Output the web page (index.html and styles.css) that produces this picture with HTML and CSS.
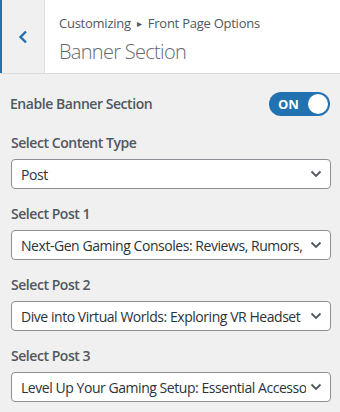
FILE: index.html
```html
<!DOCTYPE html>
<html lang="en">
<head>
    <meta charset="UTF-8">
    <meta name="viewport" content="width=device-width, initial-scale=1.0">
    <title>Banner Section</title>
    <link rel="stylesheet" href="styles.css">
</head>
<body>
    <div class="section-head">
        <button class="back" type="button" aria-label="Back">
            <svg width="12" height="16" viewBox="0 0 12 16"><path d="M9 2.5 L3.5 8 L9 13.5" fill="none" stroke="#2271b1" stroke-width="2.4"/></svg>
        </button>
        <div class="head-title">
            <span class="crumb">Customizing <span class="sep">&#9656;</span> Front Page Options</span>
            <h2>Banner Section</h2>
        </div>
    </div>

    <div class="controls">
        <div class="control toggle-row">
            <span class="label">Enable Banner Section</span>
            <span class="toggle"><span class="toggle-text">ON</span><span class="knob"></span></span>
        </div>

        <div class="control">
            <label class="label">Select Content Type</label>
            <div class="select"><span>Post</span><svg width="12" height="8" viewBox="0 0 12 8"><path d="M1.5 1.5 L6 6 L10.5 1.5" fill="none" stroke="#50575e" stroke-width="1.8"/></svg></div>
        </div>

        <div class="control">
            <label class="label">Select Post 1</label>
            <div class="select"><span>Next-Gen Gaming Consoles: Reviews, Rumors,</span><svg width="12" height="8" viewBox="0 0 12 8"><path d="M1.5 1.5 L6 6 L10.5 1.5" fill="none" stroke="#50575e" stroke-width="1.8"/></svg></div>
        </div>

        <div class="control">
            <label class="label">Select Post 2</label>
            <div class="select"><span>Dive into Virtual Worlds: Exploring VR Headset</span><svg width="12" height="8" viewBox="0 0 12 8"><path d="M1.5 1.5 L6 6 L10.5 1.5" fill="none" stroke="#50575e" stroke-width="1.8"/></svg></div>
        </div>

        <div class="control">
            <label class="label">Select Post 3</label>
            <div class="select"><span>Level Up Your Gaming Setup: Essential Accesso</span><svg width="12" height="8" viewBox="0 0 12 8"><path d="M1.5 1.5 L6 6 L10.5 1.5" fill="none" stroke="#50575e" stroke-width="1.8"/></svg></div>
        </div>
    </div>
</body>
</html>
```

FILE: styles.css
```css
body { margin: 0; background: #f0f0f1; font-family: "Open Sans", "Noto Sans", sans-serif; color: #50575e; }

.section-head { display: flex; height: 73px; background: #fff; border-bottom: 1px solid #dcdcde; }
.back { width: 45px; flex: none; background: #f0f0f1; border: none; border-left: 2px solid #2271b1; border-right: 1px solid #dcdcde; padding: 0; display: flex; align-items: center; justify-content: center; }
.head-title { padding: 14px 0 0 14px; }
.crumb { display: block; font-size: 13px; line-height: 18px; color: #50575e; letter-spacing: -0.25px; }
.crumb .sep { font-size: 10px; position: relative; top: -1px; margin: 0 3px; }
.head-title h2 { margin: 7px 0 0; font-size: 20px; font-weight: 300; line-height: 24px; color: #646970; letter-spacing: -0.7px; }

.controls { padding: 18px 9px 0 11px; }
.control { margin-bottom: 15px; }
.label { display: block; font-size: 14px; font-weight: 600; line-height: 20px; color: #50575e; margin-bottom: 6px; letter-spacing: -0.45px; }
.toggle-row { display: flex; justify-content: space-between; align-items: center; margin-bottom: 17px; }
.toggle-row .label { margin: 0 0 0 -1px; }
.toggle { display: flex; align-items: center; justify-content: space-between; width: 61px; height: 24px; box-sizing: border-box; padding: 0 2px 0 9px; margin-right: 1px; background: #2271b1; border-radius: 12px; }
.toggle-text { color: #fff; font-size: 13px; font-weight: 700; }
.knob { width: 20px; height: 20px; border-radius: 50%; background: #fff; }

.select { display: flex; align-items: center; justify-content: space-between; height: 30px; box-sizing: border-box; background: #fff; border: 1px solid #8c8f94; border-radius: 4px; padding: 0 8px 0 9px; font-size: 14px; color: #2c3338; }
.select span { white-space: nowrap; overflow: hidden; flex: 1; letter-spacing: -0.45px; }
.select svg { flex: none; margin-left: 4px; }
```
